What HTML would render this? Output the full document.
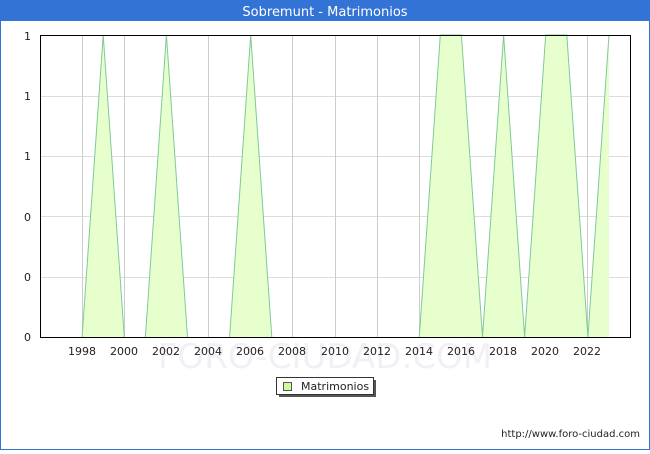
<!DOCTYPE html><html><head><style>body{margin:0;width:650px;height:450px;overflow:hidden;background:#fff;font-family:"DejaVu Sans","Liberation Sans",sans-serif}</style></head><body>
<svg width="650" height="450" xmlns="http://www.w3.org/2000/svg" font-family="DejaVu Sans, Liberation Sans, sans-serif">
<rect x="0" y="0" width="650" height="450" fill="#3473d6"/>
<rect x="1" y="21" width="648" height="428" fill="#fff"/>
<text x="325" y="16" fill="#fff" font-size="13" text-anchor="middle">Sobremunt - Matrimonios</text>
<g stroke="#dddddd" stroke-width="1">
<line x1="40" y1="96.5" x2="630" y2="96.5"/><line x1="40" y1="156.5" x2="630" y2="156.5"/><line x1="40" y1="216.5" x2="630" y2="216.5"/><line x1="40" y1="277.5" x2="630" y2="277.5"/>
</g>
<g stroke="#cccccc" stroke-width="1">
<line x1="82.5" y1="35" x2="82.5" y2="337"/><line x1="124.5" y1="35" x2="124.5" y2="337"/><line x1="166.5" y1="35" x2="166.5" y2="337"/><line x1="208.5" y1="35" x2="208.5" y2="337"/><line x1="250.5" y1="35" x2="250.5" y2="337"/><line x1="292.5" y1="35" x2="292.5" y2="337"/><line x1="335.5" y1="35" x2="335.5" y2="337"/><line x1="377.5" y1="35" x2="377.5" y2="337"/><line x1="419.5" y1="35" x2="419.5" y2="337"/><line x1="461.5" y1="35" x2="461.5" y2="337"/><line x1="503.5" y1="35" x2="503.5" y2="337"/><line x1="545.5" y1="35" x2="545.5" y2="337"/><line x1="587.5" y1="35" x2="587.5" y2="337"/>
</g>
<text x="325" y="368" fill="#f0f0f6" font-size="34" text-anchor="middle">FORO-CIUDAD.COM</text>
<polygon fill="#e6ffcc" points="82.1,337 103.2,35 124.3,337 145.4,337 166.4,35 187.5,337 229.6,337 250.7,35 271.8,337 419.3,337 440.3,35 461.4,35 482.5,337 503.6,35 524.6,337 545.7,35 566.8,35 587.9,337 609,35 609,337"/>
<g fill="none" stroke="#7fc99a" stroke-width="1">
<polyline points="82.1,337 103.2,35 124.3,337"/>
<polyline points="145.4,337 166.4,35 187.5,337"/>
<polyline points="229.6,337 250.7,35 271.8,337"/>
<polyline points="419.3,337 440.3,35 461.4,35 482.5,337 503.6,35 524.6,337 545.7,35 566.8,35 587.9,337 609,35"/>
</g>
<rect x="40.5" y="35.5" width="590" height="302" fill="none" stroke="#000" stroke-width="1"/>
<g font-size="11" fill="#222" text-anchor="end">
<text x="31" y="40">1</text><text x="31" y="100">1</text><text x="31" y="160">1</text><text x="31" y="221">0</text><text x="31" y="281">0</text><text x="31" y="341">0</text>
</g>
<g font-size="11" fill="#222" text-anchor="middle">
<text x="82" y="355">1998</text><text x="124" y="355">2000</text><text x="166" y="355">2002</text><text x="208" y="355">2004</text><text x="250" y="355">2006</text><text x="292" y="355">2008</text><text x="335" y="355">2010</text><text x="377" y="355">2012</text><text x="419" y="355">2014</text><text x="461" y="355">2016</text><text x="503" y="355">2018</text><text x="545" y="355">2020</text><text x="587" y="355">2022</text>
</g>
<rect x="279" y="380" width="97" height="17" fill="#555"/>
<rect x="276.5" y="377.5" width="97" height="17" fill="#fff" stroke="#333"/>
<rect x="283.5" y="382.5" width="8" height="8" fill="#ccff99" stroke="#555"/>
<text x="301" y="390" font-size="11" fill="#222">Matrimonios</text>
<text x="640" y="437" font-size="10" fill="#222" text-anchor="end">http://www.foro-ciudad.com</text>
</svg>
</body></html>
